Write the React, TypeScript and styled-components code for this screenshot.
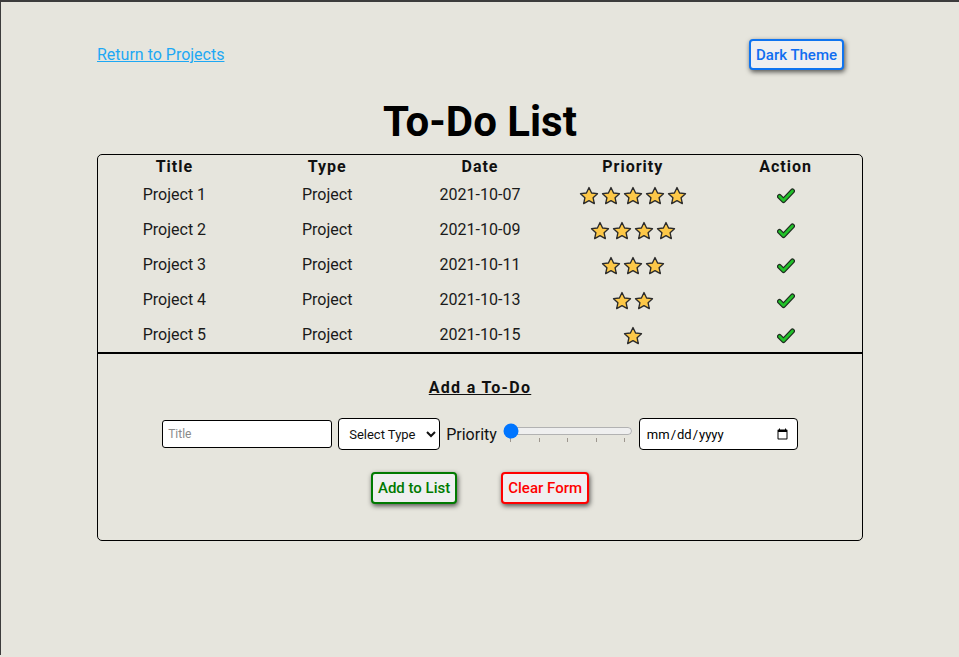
import styled, { createGlobalStyle } from 'styled-components'

const GlobalStyle = createGlobalStyle`
  html, body {
    margin: 0;
    padding: 0;
    background: #e6e5dd;
  }
  body {
    font-family: Roboto, "Liberation Sans", sans-serif;
    color: #111;
  }
`

type Todo = { title: string; type: string; date: string; priority: number }

const todos: Todo[] = [
  { title: 'Project 1', type: 'Project', date: '2021-10-07', priority: 5 },
  { title: 'Project 2', type: 'Project', date: '2021-10-09', priority: 4 },
  { title: 'Project 3', type: 'Project', date: '2021-10-11', priority: 3 },
  { title: 'Project 4', type: 'Project', date: '2021-10-13', priority: 2 },
  { title: 'Project 5', type: 'Project', date: '2021-10-15', priority: 1 },
]

const Star = () => (
  <svg width='20' height='20' viewBox='0 0 24 24'>
    <path
      d='M12 1.8l3.1 6.6 7.1.8-5.3 4.9 1.5 7.1L12 17.6l-6.4 3.6 1.5-7.1-5.3-4.9 7.1-.8z'
      fill='#fdc848'
      stroke='#2b2b2b'
      strokeWidth='1.6'
      strokeLinejoin='round'
    />
  </svg>
)

const Check = () => (
  <svg width='18' height='16' viewBox='0 0 18 16'>
    <path d='M2.5 8.5l4 4L15.5 3' fill='none' stroke='#1f2b1f' strokeWidth='5' strokeLinecap='round' strokeLinejoin='round' />
    <path d='M2.5 8.5l4 4L15.5 3' fill='none' stroke='#22c12a' strokeWidth='2.6' strokeLinecap='round' strokeLinejoin='round' />
  </svg>
)

const App = () => {
  return (
    <Page>
      <GlobalStyle />
      <Main>
        <TopBar>
          <BackLink href='#'>Return to Projects</BackLink>
          <ThemeButton>Dark Theme</ThemeButton>
        </TopBar>
        <Heading>To-Do List</Heading>
        <Card>
          <Table>
            <thead>
              <tr>
                <Th>Title</Th>
                <Th>Type</Th>
                <Th>Date</Th>
                <Th>Priority</Th>
                <Th>Action</Th>
              </tr>
            </thead>
            <tbody>
              {todos.map((t) => (
                <tr key={t.title}>
                  <Td>{t.title}</Td>
                  <Td>{t.type}</Td>
                  <Td>{t.date}</Td>
                  <Td>
                    <Stars>
                      {Array.from({ length: t.priority }).map((_, i) => (
                        <Star key={i} />
                      ))}
                    </Stars>
                  </Td>
                  <Td>
                    <Stars>
                      <Check />
                    </Stars>
                  </Td>
                </tr>
              ))}
            </tbody>
          </Table>
          <FormSection>
            <FormTitle>Add a To-Do</FormTitle>
            <FormRow>
              <TextInput placeholder='Title' />
              <Select defaultValue=''>
                <option value=''>Select Type</option>
                <option value='project'>Project</option>
                <option value='task'>Task</option>
              </Select>
              <Label>Priority</Label>
              <Range type='range' min={1} max={5} defaultValue={1} list='ticks' />
              <datalist id='ticks'>
                <option value='1' />
                <option value='2' />
                <option value='3' />
                <option value='4' />
                <option value='5' />
              </datalist>
              <DateInput type='date' />
            </FormRow>
            <ButtonRow>
              <ActionButton $color='#007a00'>Add to List</ActionButton>
              <ActionButton $color='#ff0000'>Clear Form</ActionButton>
            </ButtonRow>
          </FormSection>
        </Card>
      </Main>
    </Page>
  )
}

export default App

const Page = styled.div`
  min-height: 655px;
  border-top: 2px solid #3c3c3c;
  border-left: 1px solid #3c3c3c;
  box-sizing: border-box;
  padding-top: 37px;
`

const Main = styled.main`
  width: 766px;
  margin: 0 auto;
`

const TopBar = styled.div`
  display: flex;
  align-items: center;
  justify-content: space-between;
  padding-right: 19px;
  height: 31px;
`

const BackLink = styled.a`
  color: #1ea8f4;
  font-size: 16px;
  text-decoration: underline;
`

const ThemeButton = styled.button`
  font-family: Roboto, "Liberation Sans", sans-serif;
  font-size: 15px;
  font-weight: 500;
  color: #0f6df0;
  background: #efeff0;
  border: 2px solid #0f74f0;
  border-radius: 4px;
  height: 31px;
  padding: 0 5px;
  box-shadow: 1px 2px 5px rgba(0, 0, 0, 0.65);
`

const Heading = styled.h1`
  margin: 27px 0 7px;
  text-align: center;
  font-size: 42px;
  line-height: 50px;
  font-weight: 700;
  color: #000;
`

const Card = styled.section`
  border: 1px solid #000;
  border-radius: 5px;
`

const Table = styled.table`
  width: 100%;
  border-collapse: collapse;
  table-layout: fixed;
`

const Th = styled.th`
  height: 22px;
  padding: 0;
  font-size: 16px;
  font-weight: 700;
  letter-spacing: 1px;
  text-align: center;
  vertical-align: middle;
`

const Td = styled.td`
  height: 35px;
  padding: 0;
  font-size: 16px;
  text-align: center;
  color: #1a1a1a;
`

const Stars = styled.div`
  display: flex;
  justify-content: center;
  align-items: center;
  gap: 2px;
  padding-top: 2px;
`

const FormSection = styled.div`
  border-top: 2px solid #000;
  padding: 24px 0 36px;
  display: flex;
  flex-direction: column;
  align-items: center;
`

const FormTitle = styled.h3`
  margin: 0;
  font-size: 16px;
  line-height: 19px;
  font-weight: 700;
  letter-spacing: 1.3px;
  text-decoration: underline;
`

const FormRow = styled.div`
  margin-top: 21px;
  display: flex;
  align-items: center;
  gap: 6px;
  height: 32px;
`

const TextInput = styled.input`
  box-sizing: border-box;
  width: 170px;
  height: 28px;
  border: 1px solid #000;
  border-radius: 3px;
  padding: 0 5px;
  font-family: Roboto, "Liberation Sans", sans-serif;
  font-size: 12px;
  background: #fff;
  &::placeholder {
    color: #8a8a8a;
  }
`

const Select = styled.select`
  box-sizing: border-box;
  width: 102px;
  height: 32px;
  border: 1px solid #000;
  border-radius: 4px;
  padding-left: 6px;
  font-family: Roboto, "Liberation Sans", sans-serif;
  font-size: 13px;
  background: #fff;
  color: #111;
`

const Label = styled.label`
  font-size: 16px;
`

const Range = styled.input`
  width: 130px;
  margin: 0;
  align-self: flex-start;
  margin-top: 2px;
`

const DateInput = styled.input`
  box-sizing: border-box;
  width: 159px;
  height: 32px;
  border: 1px solid #000;
  border-radius: 4px;
  padding: 0 6px;
  font-family: Roboto, "Liberation Sans", sans-serif;
  font-size: 13px;
  background: #fff;
`

const ButtonRow = styled.div`
  margin-top: 22px;
  display: flex;
  gap: 44px;
`

const ActionButton = styled.button<{ $color: string }>`
  height: 32px;
  padding: 0 5px;
  font-family: Roboto, "Liberation Sans", sans-serif;
  font-size: 15px;
  font-weight: 500;
  color: ${({ $color }) => $color};
  background: #efeff0;
  border: 2px solid ${({ $color }) => $color};
  border-radius: 4px;
  box-shadow: 1px 2px 5px rgba(0, 0, 0, 0.65);
`
